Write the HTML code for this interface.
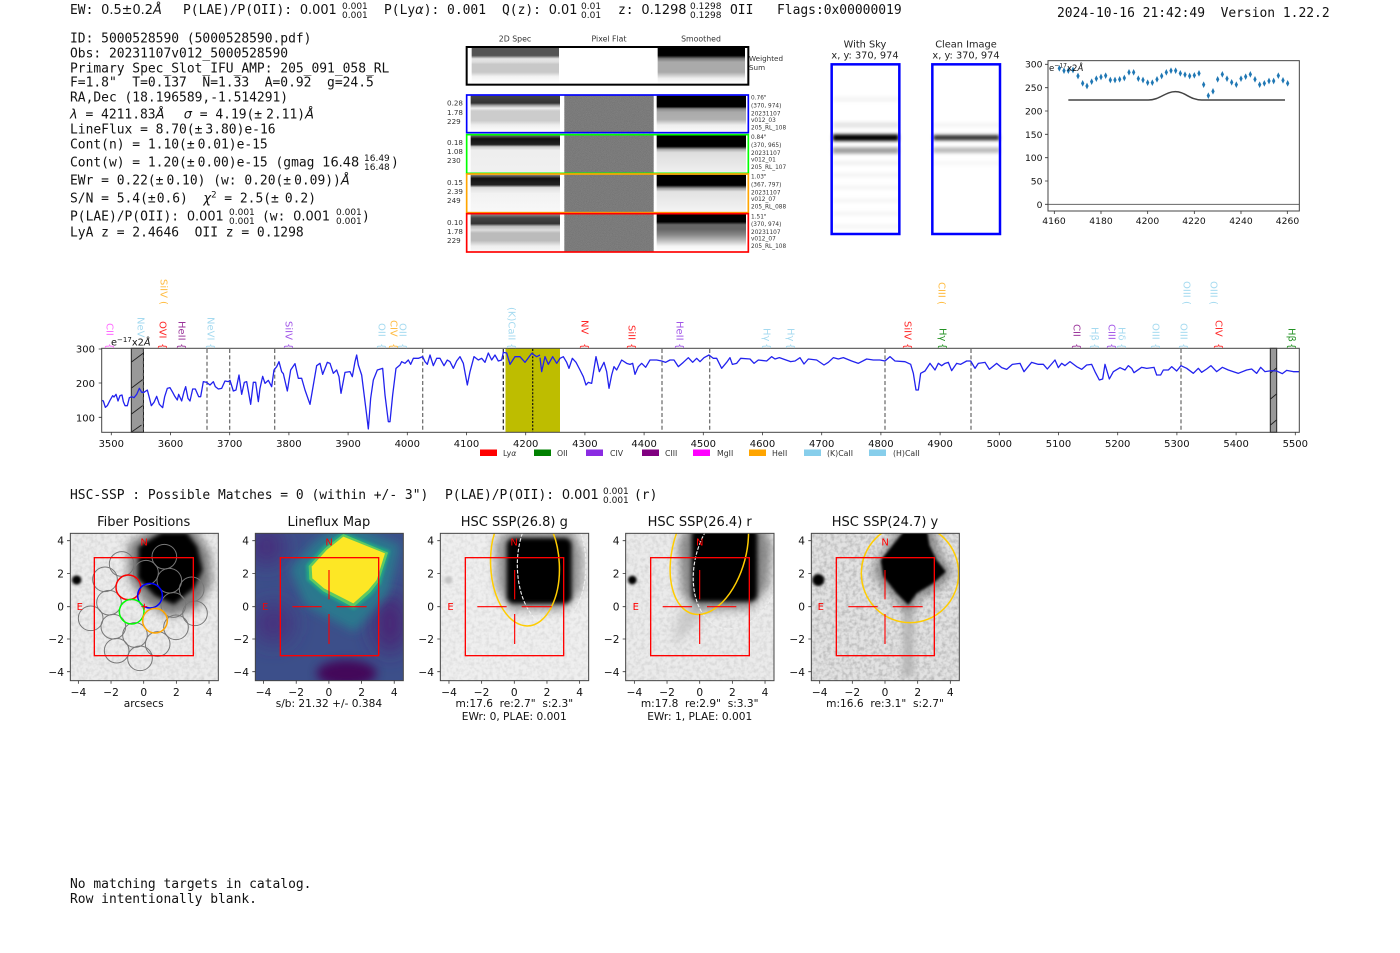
<!DOCTYPE html>
<html lang="en"><head><meta charset="utf-8"><title>Detection report 5000528590</title>
<style>
html,body{margin:0;padding:0;background:#fff}
svg{display:block}
text{font-family:"DejaVu Sans","Liberation Sans",sans-serif;fill:#111}
.m{font-family:"DejaVu Sans Mono","Liberation Mono",monospace;font-size:12.95px;white-space:pre}
.i{font-family:"DejaVu Sans","Liberation Sans",sans-serif;font-style:italic}
.n{font-family:"DejaVu Sans","Liberation Sans",sans-serif;font-size:12.9px}
.s{font-family:"DejaVu Sans","Liberation Sans",sans-serif;font-size:9px}
.t{font-size:13px;text-anchor:middle}
.km{font-size:10.6px;text-anchor:middle}
.ke{font-size:10.6px;text-anchor:end}
.c{font-size:10.6px;text-anchor:middle}
.x{font-size:10px;text-anchor:middle}
.y{font-size:9.2px;text-anchor:end}
.xp{font-size:9.2px;text-anchor:middle}
.lg{font-size:7.8px;fill:#333}
.sm{font-size:7.2px;fill:#333}
.xs{font-size:5.8px;fill:#333}
.h{font-size:7.8px;text-anchor:middle;fill:#333}
.hh{font-size:9.8px;text-anchor:middle;fill:#222}
.l{font-size:10px}
.rd{fill:#f00}
</style></head><body>
<svg xmlns="http://www.w3.org/2000/svg" width="1400" height="953" viewBox="0 0 1400 953">
<defs>
<filter id="b2" x="-40%" y="-40%" width="180%" height="180%"><feGaussianBlur stdDeviation="2"/></filter>
<filter id="b5" x="-40%" y="-200%" width="180%" height="500%"><feGaussianBlur stdDeviation="5"/></filter>
<filter id="b4" x="-40%" y="-40%" width="180%" height="180%"><feGaussianBlur stdDeviation="4"/></filter>
<filter id="b6" x="-40%" y="-40%" width="180%" height="180%"><feGaussianBlur stdDeviation="6"/></filter>
<filter id="b8" x="-50%" y="-50%" width="200%" height="200%"><feGaussianBlur stdDeviation="8"/></filter>
<filter id="b14" x="-60%" y="-60%" width="220%" height="220%"><feGaussianBlur stdDeviation="14"/></filter>
<filter id="b30" x="-80%" y="-80%" width="260%" height="260%"><feGaussianBlur stdDeviation="30"/></filter>
<filter id="nz" x="0" y="0" width="100%" height="100%"><feTurbulence type="fractalNoise" baseFrequency=".09" numOctaves="2" seed="4"/><feColorMatrix values="0 0 0 0 0  0 0 0 0 0  0 0 0 0 0  1.6 0 0 0 -.62"/></filter>
<filter id="nz2" x="0" y="0" width="100%" height="100%"><feTurbulence type="fractalNoise" baseFrequency=".55" numOctaves="1" seed="9"/><feColorMatrix values="0 0 0 0 0  0 0 0 0 0  0 0 0 0 0  1.1 0 0 0 -.42"/></filter>
<clipPath id="c1"><rect x="31" y="70" width="444" height="442"/></clipPath>
<clipPath id="c2"><rect x="586" y="70" width="444" height="442"/></clipPath>
<clipPath id="c3"><rect x="31" y="70" width="445" height="442"/></clipPath>
<clipPath id="c4"><rect x="587" y="70" width="445" height="442"/></clipPath>
<clipPath id="c5"><rect x="64" y="70" width="444" height="442"/></clipPath>
<linearGradient id="s0" x1="0" y1="0" x2="0" y2="1"><stop offset="0" stop-color="#555"/><stop offset=".22" stop-color="#555"/><stop offset=".28" stop-color="#bbb"/><stop offset=".31" stop-color="#e6e6e6"/><stop offset=".4" stop-color="#ddd"/><stop offset=".46" stop-color="#c8c8c8"/><stop offset=".68" stop-color="#c8c8c8"/><stop offset=".8" stop-color="#f2f2f2"/><stop offset="1" stop-color="#fff"/></linearGradient>
<linearGradient id="m0" x1="0" y1="0" x2="0" y2="1"><stop offset="0" stop-color="#000"/><stop offset=".22" stop-color="#000"/><stop offset=".3" stop-color="#777"/><stop offset=".4" stop-color="#aaa"/><stop offset=".68" stop-color="#aaa"/><stop offset=".85" stop-color="#eee"/><stop offset="1" stop-color="#fff"/></linearGradient>
<linearGradient id="s1" x1="0" y1="0" x2="0" y2="1"><stop offset="0" stop-color="#444"/><stop offset=".2" stop-color="#333"/><stop offset=".26" stop-color="#999"/><stop offset=".34" stop-color="#eee"/><stop offset=".42" stop-color="#ccc"/><stop offset=".68" stop-color="#ccc"/><stop offset=".8" stop-color="#eee"/><stop offset="1" stop-color="#fff"/></linearGradient>
<linearGradient id="m1" x1="0" y1="0" x2="0" y2="1"><stop offset="0" stop-color="#000"/><stop offset=".3" stop-color="#000"/><stop offset=".36" stop-color="#888"/><stop offset=".45" stop-color="#aaa"/><stop offset=".65" stop-color="#b0b0b0"/><stop offset=".8" stop-color="#eee"/><stop offset="1" stop-color="#fafafa"/></linearGradient>
<linearGradient id="s2" x1="0" y1="0" x2="0" y2="1"><stop offset="0" stop-color="#777"/><stop offset=".1" stop-color="#111"/><stop offset=".25" stop-color="#222"/><stop offset=".31" stop-color="#ccc"/><stop offset=".4" stop-color="#eee"/><stop offset="1" stop-color="#f0f0f0"/></linearGradient>
<linearGradient id="m2" x1="0" y1="0" x2="0" y2="1"><stop offset="0" stop-color="#000"/><stop offset=".3" stop-color="#000"/><stop offset=".38" stop-color="#aaa"/><stop offset=".46" stop-color="#ddd"/><stop offset="1" stop-color="#f0f0f0"/></linearGradient>
<linearGradient id="s3" x1="0" y1="0" x2="0" y2="1"><stop offset="0" stop-color="#888"/><stop offset=".1" stop-color="#111"/><stop offset=".27" stop-color="#222"/><stop offset=".34" stop-color="#ddd"/><stop offset=".5" stop-color="#f2f2f2"/><stop offset="1" stop-color="#f8f8f8"/></linearGradient>
<linearGradient id="m3" x1="0" y1="0" x2="0" y2="1"><stop offset="0" stop-color="#000"/><stop offset=".28" stop-color="#000"/><stop offset=".36" stop-color="#999"/><stop offset=".45" stop-color="#e2e2e2"/><stop offset="1" stop-color="#f4f4f4"/></linearGradient>
<linearGradient id="s4" x1="0" y1="0" x2="0" y2="1"><stop offset="0" stop-color="#888"/><stop offset=".1" stop-color="#444"/><stop offset=".25" stop-color="#333"/><stop offset=".32" stop-color="#bbb"/><stop offset=".42" stop-color="#ddd"/><stop offset=".5" stop-color="#bbb"/><stop offset=".7" stop-color="#bbb"/><stop offset=".85" stop-color="#eee"/><stop offset="1" stop-color="#f8f8f8"/></linearGradient>
<linearGradient id="m4" x1="0" y1="0" x2="0" y2="1"><stop offset="0" stop-color="#000"/><stop offset=".2" stop-color="#000"/><stop offset=".28" stop-color="#666"/><stop offset=".4" stop-color="#666"/><stop offset=".55" stop-color="#888"/><stop offset=".7" stop-color="#bbb"/><stop offset=".85" stop-color="#f4f4f4"/><stop offset="1" stop-color="#fff"/></linearGradient>
<marker id="dm" markerUnits="userSpaceOnUse" markerWidth="16" markerHeight="24" refX="8" refY="12" viewBox="0 0 16 24"><path d="M8 2 L13 12 L8 22 L3 12Z" fill="#1f77b4"/></marker>
<g id="tk" stroke="#333" stroke-width=".8" fill="none"><path d="M-65.33 0v3M-32.67 0v3M0 0v3M32.67 0v3M65.33 0v3"/></g>
<g id="tky" stroke="#333" stroke-width=".8" fill="none"><path d="M0 540.7h-3M0 573.4h-3M0 606.7h-3M0 639h-3M0 671.7h-3"/></g>
</defs>

<!-- header -->
<text class="m" x="70" y="14">EW: <tspan class="n">0.5±0.2</tspan><tspan class="i">Å</tspan></text>
<text class="m" x="183" y="14">P(LAE)/P(OII): <tspan class="n">0.001</tspan></text>
<text class="s" x="342" y="9">0.001</text><text class="s" x="342" y="18">0.001</text>
<text class="m" x="384" y="14">P(Ly<tspan class="i">α</tspan>): 0.001</text>
<text class="m" x="502" y="14">Q(z): <tspan class="n">0.01</tspan></text>
<text class="s" x="581" y="9">0.01</text><text class="s" x="581" y="18">0.01</text>
<text class="m" x="618" y="14">z: <tspan class="n">0.1298</tspan></text>
<text class="s" x="690" y="9">0.1298</text><text class="s" x="690" y="18">0.1298</text>
<text class="m" x="730" y="14">OII</text>
<text class="m" x="777" y="14">Flags:0x00000019</text>
<text class="m" x="1057" y="17">2024-10-16 21:42:49  Version 1.22.2</text>

<!-- info block -->
<text class="m" x="70" y="42.5">ID: 5000528590 (5000528590.pdf)</text>
<text class="m" x="70" y="57.5">Obs: 20231107v012_5000528590</text>
<text class="m" x="70" y="72.5">Primary Spec_Slot_IFU_AMP: 205_091_058_RL</text>
<text class="m" x="70" y="86.5">F=1.8"  T=0.137  N=1.33  A=0.92  g=24.5</text>
<text class="m" x="70" y="101.5">RA,Dec (18.196589,-1.514291)</text>
<text class="m" x="70" y="118.5"><tspan class="i">λ</tspan> = 4211.83<tspan class="i">Å</tspan>   <tspan class="i" dx="-4">σ</tspan> = 4.19(±<tspan dx="4">2.11)</tspan><tspan class="i">Å</tspan></text>
<text class="m" x="70" y="133.5">LineFlux = 8.70(±<tspan dx="3">3.80)e-16</tspan></text>
<text class="m" x="70" y="148.5">Cont(n) = 1.10(±<tspan dx="3">0.01)e-15</tspan></text>
<text class="m" x="70" y="166.5">Cont(w) = 1.20(±<tspan dx="3">0.00)e-15 (gmag <tspan class="n">16.48</tspan></tspan></text>
<text class="s" x="364" y="161">16.49</text><text class="s" x="364" y="170">16.48</text><text class="m" x="391" y="166.5">)</text>
<text class="m" x="70" y="184.5">EWr = 0.22(±<tspan dx="3">0.10) (w: 0.20(±</tspan><tspan dx="3">0.09))</tspan><tspan class="i">Å</tspan></text>
<text class="m" x="70" y="202.5">S/N = 5.4(±<tspan dx="1">0.6)  </tspan><tspan class="i">χ</tspan><tspan font-size="9" dy="-5">2</tspan><tspan dy="5"> = 2.5(±</tspan><tspan dx="6">0.2)</tspan></text>
<text class="m" x="70" y="220.5">P(LAE)/P(OII): <tspan class="n">0.001</tspan></text>
<text class="s" x="229" y="215">0.001</text><text class="s" x="229" y="224">0.001</text>
<text class="m" x="262" y="220.5">(w: <tspan class="n">0.001</tspan></text>
<text class="s" x="336" y="215">0.001</text><text class="s" x="336" y="224">0.001</text><text class="m" x="362" y="220.5">)</text>
<text class="m" x="70" y="236.5">LyA z = 2.4646  OII z = 0.1298</text>

<!-- 2D spectra -->
<text class="h" x="515" y="41.5">2D Spec</text><text class="h" x="609" y="41.5">Pixel Flat</text><text class="h" x="701" y="41.5">Smoothed</text>
<g transform="translate(460,30) scale(.33333)">
<rect x="20" y="52" width="845" height="112" fill="#fff"/>
<rect x="35" y="53" width="262" height="108" fill="url(#s0)"/><rect x="593" y="53" width="262" height="108" fill="url(#m0)"/>
<rect x="20" y="51" width="845" height="113" fill="none" stroke="#000" stroke-width="6"/>
<rect x="313" y="196" width="268" height="112" fill="#808080"/><rect x="313" y="314" width="268" height="116" fill="#808080"/><rect x="313" y="433" width="268" height="116" fill="#808080"/><rect x="313" y="552" width="268" height="114" fill="#808080"/>
<rect x="313" y="196" width="268" height="470" filter="url(#nz2)" opacity=".3"/>
<rect x="32" y="197" width="268" height="110" fill="url(#s1)"/><rect x="590" y="197" width="268" height="110" fill="url(#m1)"/>
<rect x="32" y="315" width="268" height="114" fill="url(#s2)"/><rect x="590" y="315" width="268" height="114" fill="url(#m2)"/>
<rect x="32" y="434" width="268" height="113" fill="url(#s3)"/><rect x="590" y="434" width="268" height="113" fill="url(#m3)"/>
<rect x="32" y="553" width="268" height="112" fill="url(#s4)"/><rect x="590" y="553" width="268" height="112" fill="url(#m4)"/>
<rect x="20" y="195" width="845" height="113" fill="none" stroke="#00f" stroke-width="5"/>
<rect x="20" y="314" width="845" height="116" fill="none" stroke="#0f0" stroke-width="5"/>
<rect x="20" y="432" width="845" height="116" fill="none" stroke="#ffa500" stroke-width="5"/>
<rect x="20" y="551" width="845" height="115" fill="none" stroke="#f00" stroke-width="5"/>
</g>
<text class="sm" x="749" y="61">Weighted</text><text class="sm" x="749" y="70">Sum</text>
<text class="sm" x="447" y="105.5">0.28</text><text class="sm" x="447" y="115">1.78</text><text class="sm" x="447" y="124">229</text>
<text class="sm" x="447" y="145">0.18</text><text class="sm" x="447" y="154">1.08</text><text class="sm" x="447" y="163">230</text>
<text class="sm" x="447" y="185">0.15</text><text class="sm" x="447" y="194">2.39</text><text class="sm" x="447" y="203">249</text>
<text class="sm" x="447" y="225">0.10</text><text class="sm" x="447" y="234">1.78</text><text class="sm" x="447" y="243">229</text>
<text class="xs" x="751" y="99.5">0.76"</text><text class="xs" x="751" y="107.5">(370, 974)</text><text class="xs" x="751" y="115.5">20231107</text><text class="xs" x="751" y="122">v012_03</text><text class="xs" x="751" y="129.5">205_RL_108</text>
<text class="xs" x="751" y="139">0.84"</text><text class="xs" x="751" y="147">(370, 965)</text><text class="xs" x="751" y="155">20231107</text><text class="xs" x="751" y="161.5">v012_01</text><text class="xs" x="751" y="169">205_RL_107</text>
<text class="xs" x="751" y="178.5">1.03"</text><text class="xs" x="751" y="186.5">(367, 797)</text><text class="xs" x="751" y="194.5">20231107</text><text class="xs" x="751" y="201">v012_07</text><text class="xs" x="751" y="208.5">205_RL_088</text>
<text class="xs" x="751" y="218.5">1.51"</text><text class="xs" x="751" y="226">(370, 974)</text><text class="xs" x="751" y="234">20231107</text><text class="xs" x="751" y="240.5">v012_07</text><text class="xs" x="751" y="248">205_RL_108</text>

<!-- with sky / clean -->
<text class="hh" x="865" y="47.5">With Sky</text><text class="hh" x="865" y="58.5">x, y: 370, 974</text>
<text class="hh" x="966" y="47.5">Clean Image</text><text class="hh" x="966" y="58.5">x, y: 370, 974</text>
<g transform="translate(820,30) scale(.33333)">
<g>
<rect x="40" y="200" width="195" height="16" fill="#f5f5f5" filter="url(#b5)"/><rect x="40" y="276" width="195" height="18" fill="#e6e6e6" filter="url(#b5)"/><rect x="40" y="392" width="195" height="14" fill="#f2f2f2" filter="url(#b5)"/><rect x="40" y="428" width="195" height="14" fill="#f4f4f4" filter="url(#b5)"/><rect x="40" y="466" width="195" height="14" fill="#f6f6f6" filter="url(#b5)"/><rect x="40" y="505" width="195" height="14" fill="#f6f6f6" filter="url(#b5)"/><rect x="40" y="544" width="195" height="14" fill="#f6f6f6" filter="url(#b5)"/><rect x="40" y="582" width="195" height="14" fill="#f6f6f6" filter="url(#b5)"/>
<rect x="38" y="313" width="198" height="20" fill="#000" filter="url(#b5)"/><rect x="38" y="352" width="198" height="19" fill="#a0a0a0" filter="url(#b5)"/>
<rect x="340" y="278" width="198" height="14" fill="#f5f5f5" filter="url(#b5)"/><rect x="340" y="392" width="198" height="14" fill="#f8f8f8" filter="url(#b5)"/>
<rect x="340" y="315" width="198" height="16" fill="#333" filter="url(#b5)"/><rect x="340" y="352" width="198" height="17" fill="#bbb" filter="url(#b5)"/>
</g>
<rect x="35" y="103" width="203" height="509" fill="none" stroke="#00f" stroke-width="7.5"/>
<rect x="337" y="103" width="203" height="509" fill="none" stroke="#00f" stroke-width="7.5"/>
<!-- zoom plot -->
<polyline points="718,115 732,122 745,122 759,120 774,138 788,160 801,168 815,155 829,146 843,141 857,137 871,150 885,150 899,148 913,144 927,127 941,127 955,146 969,150 983,158 997,158 1011,148 1025,138 1039,127 1053,122 1067,122 1081,130 1095,134 1109,138 1123,136 1137,130 1151,164 1165,197 1179,184 1193,148 1207,133 1221,146 1235,157 1249,164 1263,146 1277,140 1291,133 1305,148 1319,164 1333,160 1347,153 1361,153 1375,137 1389,151 1403,160" fill="none" stroke="none" marker-start="url(#dm)" marker-mid="url(#dm)" marker-end="url(#dm)"/>
<path d="M745 210H985C1020 210 1035 185 1066 185C1095 185 1110 210 1145 210H1395" fill="none" stroke="#444" stroke-width="4.5"/>
<path d="M684 523H1438" stroke="#666" stroke-width="3" fill="none"/>
<rect x="684" y="92" width="754" height="451" fill="none" stroke="#444" stroke-width="3"/>
<path d="M703 543v9M843 543v9M983 543v9M1123 543v9M1263 543v9M1402 543v9M684 103h-9M684 173h-9M684 243h-9M684 313h-9M684 383h-9M684 453h-9M684 523h-9" stroke="#333" stroke-width="2.4" fill="none"/>
</g>
<text class="xp" x="1054" y="224">4160</text><text class="xp" x="1101" y="224">4180</text><text class="xp" x="1147.5" y="224">4200</text><text class="xp" x="1194" y="224">4220</text><text class="xp" x="1241" y="224">4240</text><text class="xp" x="1287.5" y="224">4260</text>
<text class="y" x="1042.5" y="67.5">300</text><text class="y" x="1042.5" y="91">250</text><text class="y" x="1042.5" y="114.5">200</text><text class="y" x="1042.5" y="138">150</text><text class="y" x="1042.5" y="161">100</text><text class="y" x="1042.5" y="184.5">50</text><text class="y" x="1042.5" y="208">0</text>
<text x="1049" y="71" font-size="8.6" fill="#222">e<tspan font-size="6" dy="-3.5">−17</tspan><tspan dy="3.5">x2</tspan><tspan class="i">Å</tspan></text>

<!-- spectrum -->
<rect x="505.5" y="348.3" width="54.5" height="84" fill="#bebd00"/>
<g stroke="#000" stroke-width="1">
<rect x="131.3" y="348.3" width="12.2" height="84" fill="#999" stroke="#222"/>
<path d="M131.5 362l12-9M131.5 388l12-9M131.5 414l12-9M131.5 432l10-7" stroke="#222" stroke-width=".9"/>
<rect x="1270.3" y="348.3" width="6.4" height="84" fill="#999" stroke="#222"/>
<path d="M1270.5 373l6-5M1270.5 399l6-5M1270.5 425l6-5" stroke="#222" stroke-width=".9"/>
</g>
<g stroke-width="1.2" stroke-dasharray="4 2.4" fill="none">
<path d="M207 349V432M229.7 349V432M274.7 349V432M422.7 349V432M662 349V432M709.7 349V432M885 349V432M971 349V432M1181 349V432" stroke="#666"/>
<path d="M503.3 349V432" stroke="#222"/>
<path d="M532.7 349V432" stroke="#111" stroke-dasharray="2 1.6"/>
<path d="M143 349V432" stroke="#777" stroke-dasharray="3 3" opacity=".7"/>
</g>
<g fill="none" stroke="#2222ee" stroke-width="3.9" stroke-linejoin="round">
<polyline transform="translate(90,275) scale(.33333)" points="35,376 40,378 46,397 52,392 60,376 68,362 72,366 78,358 84,378 90,362 96,360 100,380 105,392 112,392 118,368 125,365 132,368 140,358 148,340 155,352 162,352 172,345 178,368 184,392 192,382 200,364 208,388 218,398 224,365 232,340 240,338 248,352 255,365 262,375 266,358 275,378 282,350 287,335 294,370 300,378 308,342 316,342 326,365 332,365 340,320 350,322 360,330 370,320 376,335 385,342 395,340 405,318 415,320 420,316 430,348 438,345 447,300 455,358 463,322 470,320 482,388 490,322 497,322 505,380 510,340 518,304 525,325 535,316 545,335 552,285 560,275 567,260 575,290 580,296 592,348 602,285 615,266 625,310 635,310 645,345 660,388 670,330 680,272 690,265 698,298 712,262 720,265 730,295 740,285 747,305 753,355 765,292 780,290 787,305 795,260 800,240 805,270 815,300 830,420 835,462 842,370 850,315 862,285 878,280 885,360 895,440 900,440 908,360 918,280 930,270 935,260 945,265 955,255 962,268 970,250 985,250 998,245 1005,260 1012,268 1020,240 1030,272 1040,250 1050,250 1062,272 1072,255 1080,260 1090,280 1100,258 1110,245 1120,265 1132,330 1140,290 1152,245 1165,255 1175,250 1185,262 1195,234 1205,255 1215,240 1225,258 1235,255 1240,232 1250,234 1260,268 1275,245 1290,245 1305,262 1325,235 1340,245 1350,240"/>
<polyline transform="translate(500,275) scale(.33333)" points="120,248 125,290 135,245 145,268 158,245 170,265 180,250 190,245 200,262 207,280 217,250 228,262 240,285 250,305 258,330 265,322 275,325 288,245 298,290 312,262 320,290 327,340 335,300 342,275 350,285 365,255 380,265 390,268 398,265 405,298 415,275 425,265 437,277 450,255 470,255 485,258 497,262 510,255 522,255 535,275 550,262 565,248 578,262 590,250 600,260 612,248 627,240 640,250 650,250 665,280 680,262 690,248 697,268 710,265 722,250 750,252 762,265 775,255 800,258 815,245 825,252 838,248 858,255 872,260 885,258 900,248 912,267 925,252 950,255 972,270 985,262 1000,248 1015,252 1030,248 1055,258 1075,265 1100,252 1120,255 1140,255"/>
<polyline transform="translate(880,275) scale(.33333)" points="0,255 15,258 30,245 45,258 75,260 92,268 100,295 108,345 115,345 122,295 135,288 150,265 165,285 175,265 185,272 195,265 205,262 215,287 230,265 242,268 260,258 272,258 285,280 295,265 315,262 328,283 350,265 365,278 380,283 397,268 420,265 432,290 455,262 475,268 490,268 502,282 525,255 535,278 545,265 555,272 570,260 590,275 605,283 620,270 635,268 645,290 658,315 668,312 675,268 688,312 700,290 720,278 735,285 745,272 755,280 762,293 785,277 800,280 822,277 830,300 842,300 850,285 865,285 875,275 890,288 903,272 920,280 940,295 955,280 965,292 980,282 993,272 1010,290 1027,277 1045,285 1075,295 1100,285 1115,282 1130,295 1142,277 1155,290 1175,287 1190,288 1207,296 1220,286 1240,290 1258,290"/>
</g>
<rect x="101.7" y="348.3" width="1197.6" height="84" fill="none" stroke="#444" stroke-width="1"/>
<path d="M111.3 432.3v3M170.5 432.3v3M229.7 432.3v3M288.9 432.3v3M348.1 432.3v3M407.3 432.3v3M466.5 432.3v3M525.7 432.3v3M584.9 432.3v3M644.1 432.3v3M703.3 432.3v3M762.5 432.3v3M821.7 432.3v3M880.9 432.3v3M940.1 432.3v3M999.3 432.3v3M1058.5 432.3v3M1117.7 432.3v3M1176.9 432.3v3M1236.1 432.3v3M1295.3 432.3v3M101.7 349h-3M101.7 383h-3M101.7 417.3h-3" stroke="#333" stroke-width=".8" fill="none"/>
<text class="x" x="111.3" y="447">3500</text><text class="x" x="170.5" y="447">3600</text><text class="x" x="229.7" y="447">3700</text><text class="x" x="288.9" y="447">3800</text><text class="x" x="348.1" y="447">3900</text><text class="x" x="407.3" y="447">4000</text><text class="x" x="466.5" y="447">4100</text><text class="x" x="525.7" y="447">4200</text><text class="x" x="584.9" y="447">4300</text><text class="x" x="644.1" y="447">4400</text><text class="x" x="703.3" y="447">4500</text><text class="x" x="762.5" y="447">4600</text><text class="x" x="821.7" y="447">4700</text><text class="x" x="880.9" y="447">4800</text><text class="x" x="940.1" y="447">4900</text><text class="x" x="999.3" y="447">5000</text><text class="x" x="1058.5" y="447">5100</text><text class="x" x="1117.7" y="447">5200</text><text class="x" x="1176.9" y="447">5300</text><text class="x" x="1236.1" y="447">5400</text><text class="x" x="1295.3" y="447">5500</text>
<text font-size="10" x="95" y="352.5" text-anchor="end">300</text><text font-size="10" x="95" y="387" text-anchor="end">200</text><text font-size="10" x="95" y="421.5" text-anchor="end">100</text>
<text x="111" y="345.5" font-size="9.8" fill="#222">e<tspan font-size="7" dy="-3.5">−17</tspan><tspan dy="3.5">x2</tspan><tspan class="i">Å</tspan></text>

<!-- line labels -->
<g class="l">
<g opacity=".75"><text class="l" style="fill:#f3f" transform="translate(106.5,323) rotate(90)">CII</text><text class="l" style="fill:#f3f" transform="translate(106.5,343) rotate(90)">{</text></g>
<g opacity=".75"><text class="l" style="fill:#87ceeb" transform="translate(137.5,317) rotate(90)">NeV</text>
<text class="l" style="fill:#87ceeb" transform="translate(207.5,317) rotate(90)">NeVI</text><text class="l" style="fill:#87ceeb" transform="translate(207.5,343) rotate(90)">{</text>
<text class="l" style="fill:#87ceeb" transform="translate(378.5,323) rotate(90)">OII</text><text class="l" style="fill:#87ceeb" transform="translate(378.5,343) rotate(90)">{</text>
<text class="l" style="fill:#87ceeb" transform="translate(399.5,323) rotate(90)">OII</text><text class="l" style="fill:#87ceeb" transform="translate(399.5,343) rotate(90)">{</text>
<text class="l" style="fill:#87ceeb" transform="translate(508.5,307) rotate(90)">(K)CaII</text><text class="l" style="fill:#87ceeb" transform="translate(508.5,343) rotate(90)">{</text>
<text class="l" style="fill:#87ceeb" transform="translate(763.5,328) rotate(90)">Hγ</text><text class="l" style="fill:#87ceeb" transform="translate(763.5,343) rotate(90)">{</text>
<text class="l" style="fill:#87ceeb" transform="translate(787.5,328) rotate(90)">Hγ</text><text class="l" style="fill:#87ceeb" transform="translate(787.5,343) rotate(90)">{</text>
<text class="l" style="fill:#87ceeb" transform="translate(1091.5,327) rotate(90)">Hβ</text><text class="l" style="fill:#87ceeb" transform="translate(1091.5,343) rotate(90)">{</text>
<text class="l" style="fill:#87ceeb" transform="translate(1118.5,327) rotate(90)">Hδ</text><text class="l" style="fill:#87ceeb" transform="translate(1118.5,343) rotate(90)">{</text>
<text class="l" style="fill:#87ceeb" transform="translate(1152.5,323) rotate(90)">OIII</text><text class="l" style="fill:#87ceeb" transform="translate(1152.5,343) rotate(90)">{</text>
<text class="l" style="fill:#87ceeb" transform="translate(1180.5,323) rotate(90)">OIII</text><text class="l" style="fill:#87ceeb" transform="translate(1180.5,343) rotate(90)">{</text>
<text class="l" style="fill:#87ceeb" transform="translate(1183.5,281) rotate(90)">OIII</text><text class="l" style="fill:#87ceeb" transform="translate(1183.5,301) rotate(90)">(</text>
<text class="l" style="fill:#87ceeb" transform="translate(1210.5,281) rotate(90)">OIII</text><text class="l" style="fill:#87ceeb" transform="translate(1210.5,301) rotate(90)">(</text></g>
<g opacity=".85"><text class="l" style="fill:#f00" transform="translate(159.5,321) rotate(90)">OVI</text><text class="l" style="fill:#f00" transform="translate(159.5,343) rotate(90)">{</text>
<text class="l" style="fill:#f00" transform="translate(581.5,320) rotate(90)">NV</text><text class="l" style="fill:#f00" transform="translate(581.5,343) rotate(90)">{</text>
<text class="l" style="fill:#f00" transform="translate(628.5,325) rotate(90)">SiII</text><text class="l" style="fill:#f00" transform="translate(628.5,343) rotate(90)">{</text>
<text class="l" style="fill:#f00" transform="translate(904.5,321) rotate(90)">SiIV</text><text class="l" style="fill:#f00" transform="translate(904.5,343) rotate(90)">{</text>
<text class="l" style="fill:#f00" transform="translate(1215.5,320) rotate(90)">CIV</text><text class="l" style="fill:#f00" transform="translate(1215.5,343) rotate(90)">{</text></g>
<g opacity=".75"><text class="l" style="fill:#ffa500" transform="translate(160.5,279) rotate(90)">SiIV</text><text class="l" style="fill:#ffa500" transform="translate(160.5,301) rotate(90)">(</text>
<text class="l" style="fill:#ffa500" transform="translate(390.5,320) rotate(90)">CIV</text><text class="l" style="fill:#ffa500" transform="translate(390.5,343) rotate(90)">{</text>
<text class="l" style="fill:#ffa500" transform="translate(938.5,282) rotate(90)">CIII</text><text class="l" style="fill:#ffa500" transform="translate(938.5,301) rotate(90)">(</text></g>
<g opacity=".8"><text class="l" style="fill:#800080" transform="translate(178.5,321) rotate(90)">HeII</text><text class="l" style="fill:#800080" transform="translate(178.5,343) rotate(90)">{</text>
<text class="l" style="fill:#800080" transform="translate(1073.5,324) rotate(90)">CII</text><text class="l" style="fill:#800080" transform="translate(1073.5,343) rotate(90)">{</text></g>
<g opacity=".8"><text class="l" style="fill:#8a2be2" transform="translate(285.5,321) rotate(90)">SiIV</text><text class="l" style="fill:#8a2be2" transform="translate(285.5,343) rotate(90)">{</text>
<text class="l" style="fill:#8a2be2" transform="translate(676.5,321) rotate(90)">HeII</text><text class="l" style="fill:#8a2be2" transform="translate(676.5,343) rotate(90)">{</text>
<text class="l" style="fill:#8a2be2" transform="translate(1108.5,324) rotate(90)">CIII</text><text class="l" style="fill:#8a2be2" transform="translate(1108.5,343) rotate(90)">{</text></g>
<g opacity=".85"><text class="l" style="fill:#008000" transform="translate(939.5,328) rotate(90)">Hγ</text><text class="l" style="fill:#008000" transform="translate(939.5,343) rotate(90)">{</text>
<text class="l" style="fill:#008000" transform="translate(1288.5,328) rotate(90)">Hβ</text><text class="l" style="fill:#008000" transform="translate(1288.5,343) rotate(90)">{</text></g>
</g>

<!-- legend -->
<rect x="480" y="449.5" width="17" height="6.5" fill="#f00"/><text class="lg" x="503" y="456">Ly<tspan class="i">α</tspan></text>
<rect x="534" y="449.5" width="17" height="6.5" fill="#008000"/><text class="lg" x="557" y="456">OII</text>
<rect x="586" y="449.5" width="17" height="6.5" fill="#8a2be2"/><text class="lg" x="610" y="456">CIV</text>
<rect x="642" y="449.5" width="17" height="6.5" fill="#800080"/><text class="lg" x="665" y="456">CIII</text>
<rect x="693" y="449.5" width="17" height="6.5" fill="#f0f"/><text class="lg" x="717" y="456">MgII</text>
<rect x="749" y="449.5" width="17" height="6.5" fill="#ffa500"/><text class="lg" x="772" y="456">HeII</text>
<rect x="804" y="449.5" width="17" height="6.5" fill="#87ceeb"/><text class="lg" x="827" y="456">(K)CaII</text>
<rect x="869" y="449.5" width="17" height="6.5" fill="#87ceeb"/><text class="lg" x="893" y="456">(H)CaII</text>

<!-- HSC line -->
<text class="m" x="70" y="499">HSC-SSP : Possible Matches = 0 (within +/- 3")</text>
<text class="m" x="445" y="499">P(LAE)/P(OII): <tspan class="n">0.001</tspan></text>
<text class="s" x="603" y="494">0.001</text><text class="s" x="603" y="503">0.001</text><text class="m" x="634" y="499">(r)</text>

<!-- panel titles -->
<text class="t" x="143.7" y="526">Fiber Positions</text>
<text class="t" x="328.9" y="526">Lineflux Map</text>
<text class="t" x="514.3" y="526">HSC SSP(26.8) g</text>
<text class="t" x="699.7" y="526">HSC SSP(26.4) r</text>
<text class="t" x="885" y="526">HSC SSP(24.7) y</text>

<!-- panels 1,2 -->
<g transform="translate(60,510) scale(.33333)">
<g clip-path="url(#c1)">
<rect x="31" y="70" width="444" height="442" fill="#ececec"/>
<rect x="31" y="70" width="444" height="442" filter="url(#nz)" opacity=".12"/>
<path d="M205 100L300 45L400 50L450 130L455 220L410 295L330 320L255 280L205 200Z" fill="#666" filter="url(#b14)" opacity=".85"/>
<path d="M236 110L305 68L380 68L412 110L428 180L402 235L342 284L285 258L234 205Z" fill="#000" filter="url(#b6)"/>
<circle cx="50" cy="210" r="14" fill="#000" filter="url(#b4)"/>
<g fill="none" stroke="#777" stroke-width="3">
<circle cx="185" cy="162" r="37"/><circle cx="313" cy="140" r="37"/><circle cx="258" cy="188" r="37"/><circle cx="135" cy="208" r="37"/><circle cx="328" cy="212" r="37"/><circle cx="395" cy="238" r="37"/><circle cx="147" cy="278" r="37"/><circle cx="92" cy="325" r="37"/><circle cx="405" cy="310" r="37"/><circle cx="340" cy="285" r="37"/><circle cx="160" cy="350" r="37"/><circle cx="348" cy="352" r="37"/><circle cx="225" cy="375" r="37"/><circle cx="293" cy="402" r="37"/><circle cx="170" cy="422" r="37"/><circle cx="240" cy="445" r="37"/>
</g>
<g fill="none" stroke-width="4.5"><circle cx="205" cy="232" r="37" stroke="#f00"/><circle cx="270" cy="257" r="37" stroke="#00f"/><circle cx="215" cy="305" r="37" stroke="#0f0"/><circle cx="285" cy="332" r="37" stroke="#ffa500"/></g>
<rect x="103" y="143" width="297" height="294" fill="none" stroke="#f00" stroke-width="4"/>
<path d="M244 290h18M253 281v18" stroke="#f00" stroke-width="3"/>
</g>
<rect x="31" y="70" width="444" height="442" fill="none" stroke="#444" stroke-width="3"/>

<g clip-path="url(#c2)">
<rect x="586" y="70" width="444" height="442" fill="#3c4f8a"/>
<circle cx="640" cy="340" r="60" fill="#46307e" filter="url(#b30)"/>
<circle cx="620" cy="110" r="55" fill="#472d7b" filter="url(#b30)"/>
<ellipse cx="860" cy="490" rx="90" ry="40" fill="#440154" filter="url(#b14)" opacity=".9"/>
<ellipse cx="990" cy="340" rx="50" ry="90" fill="#482576" filter="url(#b30)"/>
<path d="M850 40L1020 105L985 250L885 365L735 285L690 175L770 90Z" fill="#2a788e" filter="url(#b14)"/>
<path d="M848 66L990 122L962 222L935 255L882 300L785 250L740 210L738 165L790 108Z" fill="#21a585" filter="url(#b4)"/>
<path d="M850 72L984 128L956 215L932 246L880 292L790 244L748 208L746 168L796 114Z" fill="#5ec962"/>
<path d="M850 80L975 130L950 210L925 240L880 280L792 235L757 205L755 170L800 120Z" fill="#fde725"/>
<rect x="661" y="143" width="295" height="294" fill="none" stroke="#f00" stroke-width="4"/>
<path d="M697 290h88M830 290h90M807 180v88M807 312v90" stroke="#f00" stroke-width="3.4" fill="none"/>
</g>
<rect x="586" y="70" width="444" height="442" fill="none" stroke="#444" stroke-width="3"/>
<text class="rd" x="241" y="107" font-size="30">N</text><text class="rd" x="50" y="300" font-size="30">E</text>
<text class="rd" x="796" y="107" font-size="30">N</text><text class="rd" x="606" y="300" font-size="30" opacity=".85">E</text>
</g>

<!-- panels 3,4 -->
<g transform="translate(430,510) scale(.33333)">
<g clip-path="url(#c3)">
<rect x="31" y="70" width="445" height="442" fill="#efefef"/>
<rect x="31" y="70" width="445" height="442" filter="url(#nz)" opacity=".1"/>
<circle cx="55" cy="210" r="12" fill="#c4c4c4" filter="url(#b4)"/>
<path d="M195 100L230 60L430 60L460 130L455 240L400 300L240 300L200 230Z" fill="#777" filter="url(#b14)" opacity=".75"/>
<rect x="230" y="84" width="195" height="197" rx="22" fill="#000" filter="url(#b6)"/>
<ellipse cx="365" cy="165" rx="103" ry="183" fill="none" stroke="#eee" stroke-width="3.4" stroke-dasharray="11 5"/>
<ellipse cx="285" cy="165" rx="103" ry="183" fill="none" stroke="#fc0" stroke-width="4.5" transform="rotate(-3 285 165)"/>
<rect x="106" y="143" width="295" height="294" fill="none" stroke="#f00" stroke-width="4"/>
<path d="M142 290h88M275 290h90M254 180v88M254 312v90" stroke="#f00" stroke-width="3.4" fill="none"/>
</g>
<rect x="31" y="70" width="445" height="442" fill="none" stroke="#444" stroke-width="3"/>
<g clip-path="url(#c4)">
<rect x="587" y="70" width="445" height="442" fill="#ebebeb"/>
<rect x="587" y="70" width="445" height="442" filter="url(#nz)" opacity=".12"/>
<circle cx="607" cy="210" r="13" fill="#000" filter="url(#b4)"/>
<path d="M750 300L800 280L820 320L770 370L730 410Z" fill="#bbb" filter="url(#b14)" opacity=".7"/>
<path d="M745 100L775 40L1000 40L1025 110L1015 230L960 295L800 300L755 250Z" fill="#666" filter="url(#b14)" opacity=".75"/>
<rect x="785" y="55" width="197" height="220" rx="22" fill="#000" filter="url(#b6)"/>
<ellipse cx="925" cy="165" rx="130" ry="195" fill="none" stroke="#eee" stroke-width="3.4" stroke-dasharray="11 5" transform="rotate(15 925 165)"/>
<ellipse cx="838" cy="123" rx="110" ry="195" fill="none" stroke="#fc0" stroke-width="4.5" transform="rotate(15 838 123)"/>
<rect x="662" y="143" width="296" height="294" fill="none" stroke="#f00" stroke-width="4"/>
<path d="M698 290h88M831 290h88M809 180v88M809 312v90" stroke="#f00" stroke-width="3.4" fill="none"/>
</g>
<rect x="587" y="70" width="445" height="442" fill="none" stroke="#444" stroke-width="3"/>
<text class="rd" x="241" y="107" font-size="30">N</text><text class="rd" x="52" y="300" font-size="30">E</text>
<text class="rd" x="798" y="107" font-size="30">N</text><text class="rd" x="608" y="300" font-size="30">E</text>
</g>

<!-- panel 5 -->
<g transform="translate(790,510) scale(.33333)">
<g clip-path="url(#c5)">
<rect x="64" y="70" width="444" height="442" fill="#e2e2e2"/>
<rect x="64" y="70" width="444" height="442" filter="url(#nz)" opacity=".25"/>
<circle cx="85" cy="210" r="18" fill="#000" filter="url(#b4)"/>
<rect x="338" y="270" width="34" height="230" fill="#aaa" filter="url(#b8)" opacity=".7"/>
<path d="M250 170L330 50L430 50L450 130L490 190L440 240L380 270L355 310L310 265L260 210Z" fill="#666" filter="url(#b14)" opacity=".7"/>
<path d="M272 150L340 66L412 66L418 105L440 150L468 185L430 220L380 250L355 285L320 250L280 200Z" fill="#000" filter="url(#b4)"/>
<ellipse cx="360" cy="190" rx="146" ry="148" fill="none" stroke="#fc0" stroke-width="4.5"/>
<rect x="139" y="143" width="294" height="294" fill="none" stroke="#f00" stroke-width="4"/>
<path d="M175 290h88M308 290h90M285 180v88M285 312v90" stroke="#f00" stroke-width="3.4" fill="none"/>
</g>
<rect x="64" y="70" width="444" height="442" fill="none" stroke="#444" stroke-width="3"/>
<text class="rd" x="274" y="107" font-size="30">N</text><text class="rd" x="83" y="300" font-size="30">E</text>
</g>

<!-- ticks -->
<use href="#tk" x="143.7" y="680.7"/><use href="#tk" x="328.9" y="680.7"/><use href="#tk" x="514.3" y="680.7"/><use href="#tk" x="699.7" y="680.7"/><use href="#tk" x="885" y="680.7"/>
<use href="#tky" x="70"/><use href="#tky" x="255.3"/><use href="#tky" x="440.3"/><use href="#tky" x="625.7"/><use href="#tky" x="811.3"/>

<!-- tick labels -->
<g>
<text class="km" x="78.4" y="696">−4</text><text class="km" x="111" y="696">−2</text><text class="km" x="143.7" y="696">0</text><text class="km" x="176.4" y="696">2</text><text class="km" x="209" y="696">4</text>
<text class="km" x="263.6" y="696">−4</text><text class="km" x="296.2" y="696">−2</text><text class="km" x="328.9" y="696">0</text><text class="km" x="361.6" y="696">2</text><text class="km" x="394.2" y="696">4</text>
<text class="km" x="449" y="696">−4</text><text class="km" x="481.6" y="696">−2</text><text class="km" x="514.3" y="696">0</text><text class="km" x="547" y="696">2</text><text class="km" x="579.6" y="696">4</text>
<text class="km" x="634.4" y="696">−4</text><text class="km" x="667" y="696">−2</text><text class="km" x="699.7" y="696">0</text><text class="km" x="732.4" y="696">2</text><text class="km" x="765" y="696">4</text>
<text class="km" x="819.7" y="696">−4</text><text class="km" x="852.3" y="696">−2</text><text class="km" x="885" y="696">0</text><text class="km" x="917.7" y="696">2</text><text class="km" x="950.3" y="696">4</text>
<text class="ke" x="64" y="544.5">4</text><text class="ke" x="64" y="577.5">2</text><text class="ke" x="64" y="610.5">0</text><text class="ke" x="64" y="643">−2</text><text class="ke" x="64" y="676">−4</text>
<text class="ke" x="249" y="544.5">4</text><text class="ke" x="249" y="577.5">2</text><text class="ke" x="249" y="610.5">0</text><text class="ke" x="249" y="643">−2</text><text class="ke" x="249" y="676">−4</text>
<text class="ke" x="434" y="544.5">4</text><text class="ke" x="434" y="577.5">2</text><text class="ke" x="434" y="610.5">0</text><text class="ke" x="434" y="643">−2</text><text class="ke" x="434" y="676">−4</text>
<text class="ke" x="619.5" y="544.5">4</text><text class="ke" x="619.5" y="577.5">2</text><text class="ke" x="619.5" y="610.5">0</text><text class="ke" x="619.5" y="643">−2</text><text class="ke" x="619.5" y="676">−4</text>
<text class="ke" x="805" y="544.5">4</text><text class="ke" x="805" y="577.5">2</text><text class="ke" x="805" y="610.5">0</text><text class="ke" x="805" y="643">−2</text><text class="ke" x="805" y="676">−4</text>
</g>

<!-- captions -->
<text class="c" x="143.7" y="707">arcsecs</text>
<text class="c" x="328.9" y="707">s/b: 21.32 +/- 0.384</text>
<text class="c" x="514.3" y="707" xml:space="preserve">m:17.6  re:2.7"  s:2.3"</text>
<text class="c" x="514.3" y="720">EWr: 0, PLAE: 0.001</text>
<text class="c" x="699.7" y="707" xml:space="preserve">m:17.8  re:2.9"  s:3.3"</text>
<text class="c" x="699.7" y="720">EWr: 1, PLAE: 0.001</text>
<text class="c" x="885" y="707" xml:space="preserve">m:16.6  re:3.1"  s:2.7"</text>

<!-- footer -->
<text class="m" x="70" y="888">No matching targets in catalog.</text>
<text class="m" x="70" y="903">Row intentionally blank.</text>
</svg>
</body></html>
